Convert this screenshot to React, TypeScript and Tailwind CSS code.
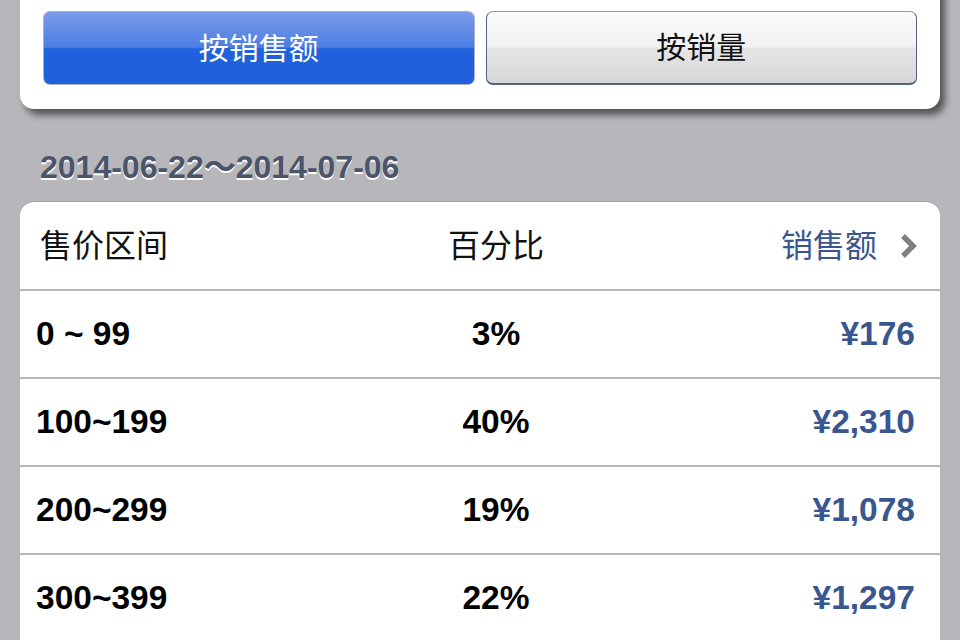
const font = 'font-["Liberation_Sans","Noto_Sans_CJK_SC",sans-serif]';

type Row = {
  range: string;
  percent: string;
  amount: string;
};

const rows: Row[] = [
  { range: '0 ~ 99', percent: '3%', amount: '¥176' },
  { range: '100~199', percent: '40%', amount: '¥2,310' },
  { range: '200~299', percent: '19%', amount: '¥1,078' },
  { range: '300~399', percent: '22%', amount: '¥1,297' },
];

function Chevron() {
  return (
    <svg width="20" height="28" viewBox="0 0 20 28" className="shrink-0">
      <polyline
        points="4,4 14,14 4,24"
        fill="none"
        stroke="#7f7f7f"
        strokeWidth="5.5"
        strokeLinejoin="miter"
        strokeLinecap="butt"
      />
    </svg>
  );
}

export default function App() {
  return (
    <div className={`h-[640px] overflow-hidden bg-[#b7b6ba] px-5 ${font}`}>
      {/* segmented switch card */}
      <div className="-mt-5 rounded-[14px] bg-white px-[23px] pt-[31px] pb-6 shadow-[5px_6px_7px_rgba(0,0,0,0.55)]">
        <div className="flex gap-[11px]">
          <button className="h-[74px] flex-1 overflow-hidden rounded-[7px] border border-[#a9b3c4] bg-[linear-gradient(#7a9ce9,#4d7de2_49%,#2261dc_51%,#1f5fdc)] text-[30px] text-white">
            按销售额
          </button>
          <button className="h-[74px] flex-1 rounded-[7px] border-[1.5px] border-b-2 border-[#56627a] border-t-[#8f9ab0] bg-[linear-gradient(#fbfbfb,#f1f1f1_49%,#e6e6e6_51%,#d6d6d6)] text-[30px] text-[#111]">
            按销量
          </button>
        </div>
      </div>

      {/* date range */}
      <div className="pt-[38px] pb-[15px] pl-5 text-[32px] leading-10 font-bold text-[#4a546a] [text-shadow:0_2px_0_#fff]">
        2014-06-22～2014-07-06
      </div>

      {/* table */}
      <div className="rounded-t-[14px] bg-white shadow-[0_-1px_0_rgba(0,0,0,0.12)]">
        <div className="grid h-[89px] grid-cols-[320px_312px_1fr] items-center border-b-2 border-[#b6b6b6] text-[32px] text-[#111]">
          <div className="pl-5">售价区间</div>
          <div className="text-center">百分比</div>
          <div className="flex items-center justify-end gap-[22px] pr-[21px] text-[#395690]">
            <span>销售额</span>
            <Chevron />
          </div>
        </div>
        {rows.map((r) => (
          <div
            key={r.range}
            className="grid h-[88px] grid-cols-[320px_312px_1fr] items-center border-b-2 border-[#b6b6b6] text-[33.5px] font-bold"
          >
            <div className="pl-[16px] text-black">{r.range}</div>
            <div className="text-center text-black">{r.percent}</div>
            <div className="pr-[25px] text-right text-[#395690]">{r.amount}</div>
          </div>
        ))}
      </div>
    </div>
  );
}
